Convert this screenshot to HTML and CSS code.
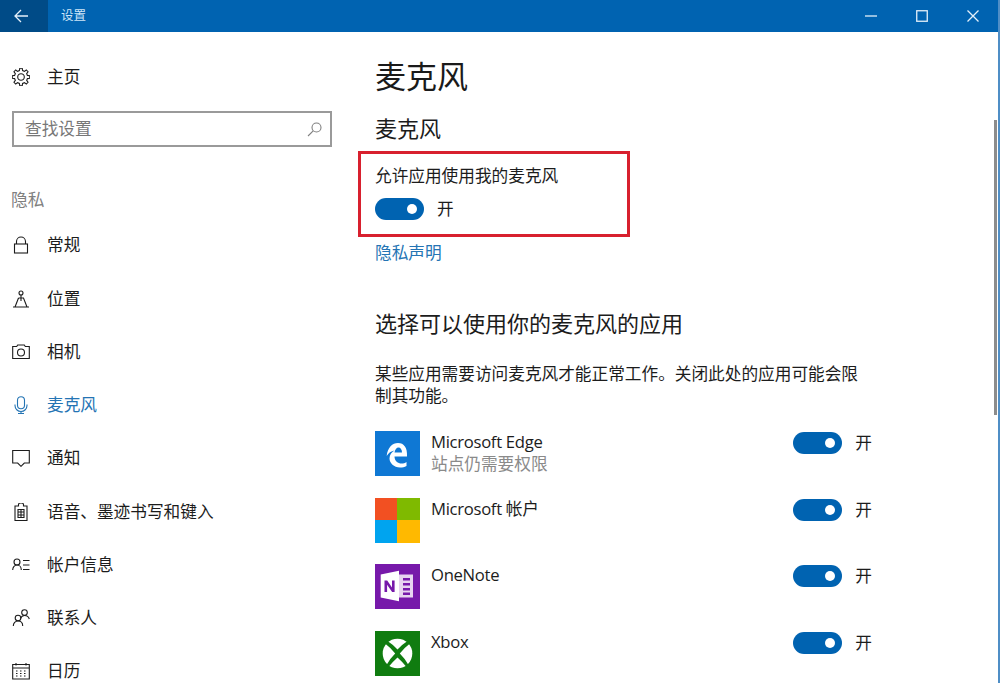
FILE: index.html
```html
<!DOCTYPE html>
<html lang="zh-CN">
<head>
<meta charset="utf-8">
<title>设置</title>
<link rel="stylesheet" href="styles.css">
</head>
<body>
<div class="window">
  <header class="titlebar">
    <button class="back" aria-label="返回">
      <svg width="14" height="14" viewBox="0 0 14 14" class="line"><path d="M14 7H1M7 1 1 7l6 6"/></svg>
    </button>
    <span class="app-title">设置</span>
    <div class="win-controls">
      <svg width="12" height="12" viewBox="0 0 12 12" class="line"><path d="M0 6H12"/></svg>
      <svg width="12" height="12" viewBox="0 0 12 12" class="line"><rect x=".75" y=".75" width="10.500" height="10.500"/></svg>
      <svg width="12" height="12" viewBox="0 0 12 12" class="line"><path d="M.5.500l11 11M11.500.500l-11 11"/></svg>
    </div>
  </header>
  <div class="content">
    <aside class="sidebar">
      <div class="nav-item home">
        <svg class="icon" viewBox="-9 -9 18 18"><polygon points="6.4,-1.6 8.71,-1.22 8.71,1.22 6.4,1.6 5.66,3.4 7.03,5.3 5.3,7.03 3.4,5.66 1.6,6.4 1.22,8.71 -1.22,8.71 -1.6,6.4 -3.4,5.66 -5.3,7.03 -7.03,5.3 -5.66,3.4 -6.4,1.6 -8.71,1.22 -8.71,-1.22 -6.4,-1.6 -5.66,-3.4 -7.03,-5.3 -5.3,-7.03 -3.4,-5.66 -1.6,-6.4 -1.22,-8.71 1.22,-8.71 1.6,-6.4 3.4,-5.66 5.3,-7.03 7.03,-5.3 5.66,-3.4"/><circle r="3.300"/></svg>
        <span>主页</span>
      </div>
      <div class="search">
        <span>查找设置</span>
        <svg width="15" height="15" viewBox="0 0 15 15" class="search-icon"><circle cx="9.500" cy="5.500" r="4.500"/><path d="M6.200 8.800 1 14"/></svg>
      </div>
      <div class="group-title">隐私</div>
      <nav class="nav">
        <div class="nav-item">
          <svg class="icon" viewBox="0 0 18 18"><rect x="2.500" y="8" width="13" height="9"/><path d="M4.500 8V5.500a4.500 4.500 0 0 1 9 0V8"/></svg>
          <span>常规</span>
        </div>
        <div class="nav-item">
          <svg class="icon" viewBox="0 0 18 18"><circle cx="9" cy="3" r="2"/><path d="M9 5v6M6.500 8h5l3.500 9H3l3.500-9M1 17h16"/></svg>
          <span>位置</span>
        </div>
        <div class="nav-item">
          <svg class="icon" viewBox="0 0 18 18"><path d="M.7 3.500h4l1-1.500h6.600l1 1.500h4v12H.7z"/><circle cx="9" cy="9.500" r="3.500"/></svg>
          <span>相机</span>
        </div>
        <div class="nav-item active">
          <svg class="icon" viewBox="0 0 18 18"><rect x="5.500" y=".7" width="7" height="12" rx="3.500"/><path d="M3 8.500v1a6 6 0 0 0 12 0v-1M9 15.500v2M6 17.500h6"/></svg>
          <span>麦克风</span>
        </div>
        <div class="nav-item">
          <svg class="icon" viewBox="0 0 18 18"><path d="M.7 1.500h16.600v12.500h-5L9 17.300 5.700 14h-5z"/></svg>
          <span>通知</span>
        </div>
        <div class="nav-item">
          <svg class="icon" viewBox="0 0 18 18"><path d="M3 3h3.500V1.500a2.500 1.500 0 0 1 5 0V3H15v14.500H3z"/><path d="M6 6.500h6v8H6zM6 9h6M6 12h6M9 6.500v8"/></svg>
          <span>语音、墨迹书写和键入</span>
        </div>
        <div class="nav-item">
          <svg class="icon" viewBox="0 0 18 18"><circle cx="5" cy="6" r="3"/><path d="M.7 14c0-3 2-5 4.300-5s4.300 2 4.300 5M11 4.500h6.500M11 9h6.500M11 13.500h6.500"/></svg>
          <span>帐户信息</span>
        </div>
        <div class="nav-item">
          <svg class="icon" viewBox="0 0 18 18"><circle cx="12.500" cy="3.500" r="2.800"/><path d="M8.500 9.500c.8-2 2.300-3 4-3 2.500 0 4.300 1.700 4.800 3.500"/><circle cx="6" cy="9" r="2.800"/><path d="M1.300 17c0-3 2-5 4.700-5s4.700 2 4.700 5"/></svg>
          <span>联系人</span>
        </div>
        <div class="nav-item">
          <svg class="icon" viewBox="0 0 18 18"><path d="M.7 2.500h16.600v14.500H.7zM.7 6h16.600M4 1v2.500M14 1v2.500M4 9h1.500M8 9h1.500M12 9h1.500M4 11.500h1.500M8 11.500h1.500M12 11.500h1.500M4 14h1.500M8 14h1.500M12 14h1.500"/></svg>
          <span>日历</span>
        </div>
      </nav>
    </aside>
    <main class="main">
      <h1 class="page-title">麦克风</h1>
      <h2 class="section-title">麦克风</h2>
      <div class="highlight">
        <div class="label">允许应用使用我的麦克风</div>
        <div class="switch-row"><span class="switch"></span><span>开</span></div>
      </div>
      <a class="link">隐私声明</a>
      <h2 class="section-title apps-title">选择可以使用你的麦克风的应用</h2>
      <p class="desc">某些应用需要访问麦克风才能正常工作。关闭此处的应用可能会限制其功能。</p>
      <div class="app-list">
        <div class="app-row">
          <svg class="app-icon edge" viewBox="0 0 45 45"><path fill-rule="evenodd" d="M11.700 25C12.500 16.500 17.500 12 23 12c6 0 9.500 4.500 9 13.500H19.500c0 4.500 3.500 7 7 7 2 0 3.500-.5 5-1.500v4c-2 1-4 1.500-6.500 1.500-6 0-10.500-4.500-10.500-9 0-3.500 2-6.500 5-8-3.500.5-6 2.500-7.800 5.500zM19.500 21.500H27c0-3-1.500-5-3.500-5s-3.500 2-4 5z"/></svg>
          <div class="app-text"><div class="app-name">Microsoft Edge</div><div class="note">站点仍需要权限</div></div>
          <div class="switch-row"><span class="switch"></span><span>开</span></div>
        </div>
        <div class="app-row">
          <svg class="app-icon" viewBox="0 0 45 45"><rect width="22" height="22" fill="#f25022"/><rect x="22" width="23" height="22" fill="#7fba00"/><rect y="22" width="22" height="23" fill="#00a4ef"/><rect x="22" y="22" width="23" height="23" fill="#ffb900"/></svg>
          <div class="app-text"><div class="app-name">Microsoft 帐户</div></div>
          <div class="switch-row"><span class="switch"></span><span>开</span></div>
        </div>
        <div class="app-row">
          <svg class="app-icon onenote" viewBox="0 0 45 45"><path class="leaves" d="M24 10.500h14v23H24zM28 14v2.500h7V14zM28 19v2.500h7V19zM28 24v2.500h7V24zM28 28.500V31h7v-2.500z" fill-rule="evenodd"/><path class="page" d="M5.700 10.500 24 6.700v30.600l-18.300-3.800z"/><path class="n" d="M9.500 16.500h2.700l4.800 7v-7h2.600V28h-2.500l-5-7.200V28H9.500z"/></svg>
          <div class="app-text"><div class="app-name">OneNote</div></div>
          <div class="switch-row"><span class="switch"></span><span>开</span></div>
        </div>
        <div class="app-row">
          <svg class="app-icon xbox" viewBox="0 0 45 45"><circle cx="22.500" cy="22.500" r="14.800"/><path class="x" d="M12.500 10Q18 13.500 22.500 18.500 27 13.500 32.500 10L35 12.500Q29 17 24.800 22.500 29.500 27 33.500 34L31.500 36Q27 30.500 22.500 26.500 18 30.500 13.500 36L11.500 34Q15.500 27 20.200 22.500 16 17 10 12.500Z"/></svg>
          <div class="app-text"><div class="app-name">Xbox</div></div>
          <div class="switch-row"><span class="switch"></span><span>开</span></div>
        </div>
      </div>
    </main>
    <div class="scroll-track"><div class="scroll-thumb"></div></div>
  </div>
</div>
</body>
</html>
```
FILE: styles.css
```css
* { box-sizing: border-box; }
html, body { margin: 0; height: 100%; overflow: hidden; background: #fff; }
body {
  font-family: "Open Sans", "Noto Sans CJK SC", sans-serif;
  font-size: 16.66px;
  line-height: 22px;
  color: #1c1c1c;
}
.window { height: 683px; display: flex; flex-direction: column; border-right: 2px solid #4f8ec6; overflow: hidden; }
.line { fill: none; stroke: #e4f0fa; stroke-width: 1.3; }

.titlebar { flex: 0 0 32px; background: #0063b1; color: #cfe6f8; display: flex; align-items: center; }
.back { width: 48px; height: 32px; padding: 0 6px 0 0; border: 0; background: #004b87; display: flex; align-items: center; justify-content: center; margin-right: 13px; }
.app-title { font-size: 12.5px; }
.win-controls { margin-left: auto; width: 138px; display: flex; align-items: center; justify-content: space-between; padding: 0 0 0 5px; }
.win-controls svg:last-child { margin-right: 19px; }

.content { flex: 1; display: grid; grid-template-columns: 375px 1fr 8px; min-height: 0; }

.sidebar { padding-top: 18px; }
.nav-item { height: 53.250px; display: flex; align-items: center; padding-left: 12px; gap: 17px; }
.icon { width: 18px; height: 18px; flex: none; fill: none; stroke: currentColor; stroke-width: 1.1; }
.active { color: #2474b4; }
.search { width: 320px; height: 36px; margin: 8px 0 0 12px; border: 2px solid #9a9a9a; padding: 0 8px 0 11px; display: flex; align-items: center; justify-content: space-between; color: #777; }
.search-icon { fill: none; stroke: #808080; stroke-width: 1.1; }
.group-title { margin: 42px 0 0 11px; color: #808080; }
.nav { margin-top: 7.500px; }

.main { padding-top: 20px; min-width: 0; }
.page-title { margin: 0; font-size: 31px; line-height: 48px; font-weight: 400; color: #1a1a1a; }
.section-title { margin: 13px 0 0; font-size: 22px; line-height: 30px; font-weight: 400; }
.highlight { width: 272px; height: 86px; margin: 8px 0 0 -17px; border: 3px solid #d8202e; padding: 10px 0 0 14px; }
.label { line-height: 24px; }
.switch-row { display: flex; align-items: center; gap: 13px; height: 24px; margin-top: 9px; }
.switch { width: 49px; height: 22px; border-radius: 11px; background: #0063b1; position: relative; flex: none; }
.switch::after { content: ""; position: absolute; right: 7px; top: 6px; width: 10px; height: 10px; border-radius: 50%; background: #fff; }
.link { display: block; margin-top: 4px; line-height: 24px; color: #2474b4; }
.apps-title { margin-top: 43px; }
.desc { width: 490px; margin: 25px 0 0; line-height: 22px; }
.app-list { margin-top: 24px; display: flex; flex-direction: column; gap: 21.500px; width: 497px; }
.app-row { display: flex; height: 45px; }
.app-icon { width: 45px; height: 45px; flex: none; margin-right: 11px; }
.app-text { flex: 1; line-height: 22px; }
.app-name { letter-spacing: -.3px; }
.note { color: #8a8a8a; letter-spacing: 0; }
.app-row .switch-row { margin-top: 1px; height: 22px; gap: 13px; }
.edge { background: #0f78d4; fill: #fff; }
.onenote { background: #7719aa; }
.onenote .page { fill: #fff; }
.onenote .leaves { fill: #e7d4f0; }
.onenote .n { fill: #7719aa; }
.xbox { background: #107c10; fill: #fff; }
.xbox .x { fill: #107c10; }

.scroll-track { position: relative; }
.scroll-thumb { width: 2.500px; height: 295px; margin-top: 88px; margin-left: 4px; background: #8c8c8c; }
```
